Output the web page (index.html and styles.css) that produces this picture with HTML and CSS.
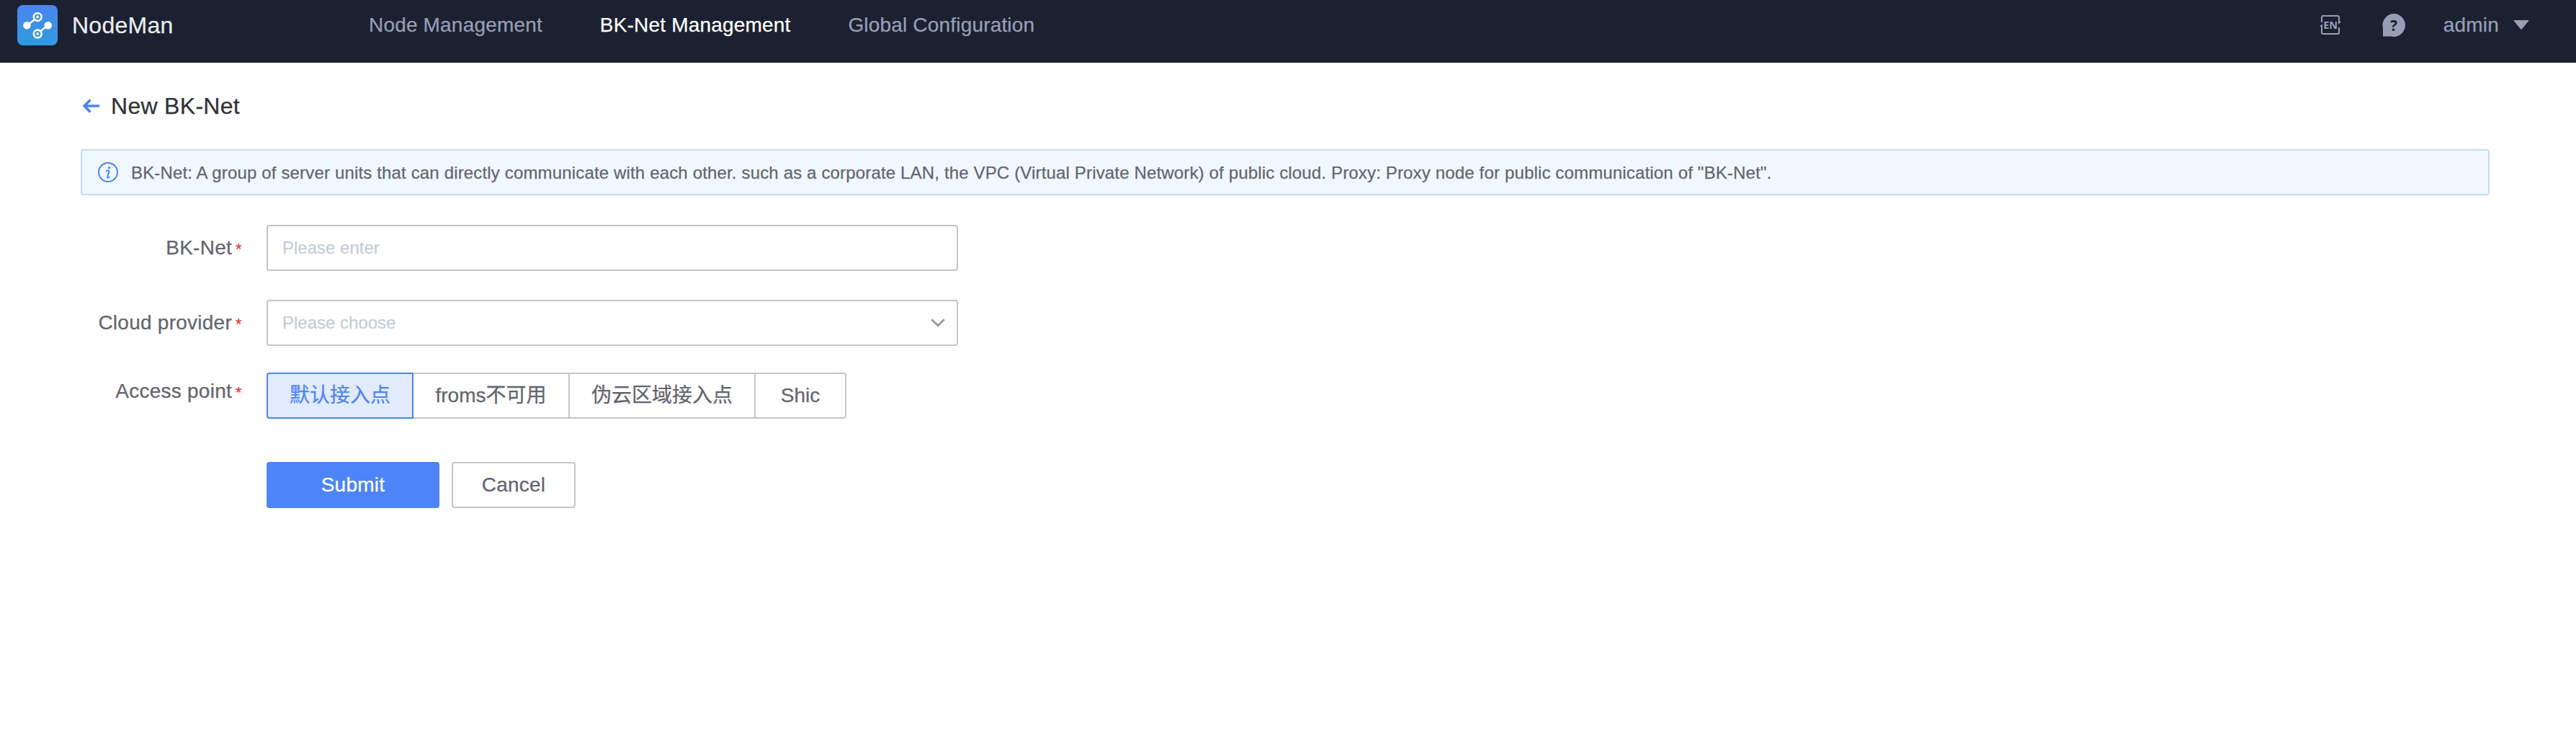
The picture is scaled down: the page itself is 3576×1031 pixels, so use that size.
FILE: index.html
```html
<!DOCTYPE html>
<html lang="en">
<head>
<meta charset="utf-8">
<title>NodeMan</title>
<link rel="stylesheet" href="styles.css">
</head>
<body>
<header class="header">
  <div class="brand">
    <svg class="logo" width="56" height="56" viewBox="0 0 56 56">
      <defs><linearGradient id="lg" x1="0" y1="0" x2="0" y2="1"><stop offset="0" stop-color="#4b85f0"/><stop offset="1" stop-color="#2e9be0"/></linearGradient></defs>
      <rect width="56" height="56" rx="8" fill="url(#lg)"/>
      <g stroke="#fff" stroke-width="2.600" fill="none">
        <path d="M14 28.300L24 20M42 28.300L32 36.500"/>
        <circle cx="28.200" cy="16.600" r="5.400"/><circle cx="28.200" cy="40" r="5.400"/>
      </g>
      <circle cx="28.200" cy="16.600" r="2" fill="#fff"/><circle cx="28.200" cy="40" r="2" fill="#fff"/>
      <circle cx="13.400" cy="28.300" r="5.300" fill="#fff"/><circle cx="42.700" cy="28.300" r="5.300" fill="#fff"/>
    </svg>
    <span class="brand-name">NodeMan</span>
  </div>
  <nav class="nav">
    <a class="nav-item">Node Management</a>
    <a class="nav-item active">BK-Net Management</a>
    <a class="nav-item">Global Configuration</a>
  </nav>
  <div class="tools">
    <svg class="lang" width="32" height="32" viewBox="0 0 32 32">
      <g fill="none" stroke="#979fb6" stroke-width="2">
        <path d="M3 12V5q0-2 2-2h20q2 0 2 2v8M27 19v7q0 2-2 2H5q-2 0-2-2V17"/>
      </g>
      <path d="M26 11h4l-4 4zM4 14v4H0z" fill="#979fb6"/>
      <text x="15.200" y="21" class="lang-text">EN</text>
    </svg>
    <svg class="help" width="32" height="32" viewBox="0 0 32 32">
      <path d="M16 0a16 16 0 1 1-4 31.500H1V20A16 16 0 0 1 16 0z" fill="#979fb6"/>
      <text x="16" y="23.500" class="help-text">?</text>
    </svg>
    <span class="user">admin</span>
    <svg class="caret" width="22" height="14" viewBox="0 0 22 14"><path d="M1.500 0h19q1.500 0 .5 1.200L12 12.300q-1 1-2 0L1 1.200Q0 0 1.500 0z" fill="#979fb6"/></svg>
  </div>
</header>
<main class="page">
  <div class="title-row">
    <svg class="back" width="26" height="22" viewBox="0 0 26 22"><path d="M11.500 2.500L3 11l8.500 8.500M3 11h21" fill="none" stroke="#4d84f7" stroke-width="3.500"/></svg>
    <h1 class="title">New BK-Net</h1>
  </div>
  <div class="alert">
    <svg class="info" width="28" height="28" viewBox="0 0 28 28"><circle cx="14" cy="14" r="13" fill="none" stroke="#4d84f7" stroke-width="2"/><circle cx="15.600" cy="7.800" r="1.700" fill="#4d84f7"/><path d="M11 12.700q3-1.800 4-1.600.8.300.2 2.400l-2 6.600q-.4 1.800.4 1.800 1 0 3-1.800" fill="none" stroke="#4d84f7" stroke-width="1.900"/></svg>
    <span class="alert-text">BK-Net: A group of server units that can directly communicate with each other. such as a corporate LAN, the VPC (Virtual Private Network) of public cloud. Proxy: Proxy node for public communication of "BK-Net".</span>
  </div>
  <form class="form">
    <div class="row">
      <label class="label"><span>BK-Net</span><span class="star">*</span></label>
      <div class="input"><span>Please enter</span></div>
    </div>
    <div class="row">
      <label class="label"><span>Cloud provider</span><span class="star">*</span></label>
      <div class="input"><span>Please choose</span>
        <svg class="chev" width="20" height="12" viewBox="0 0 20 12"><path d="M1.200 1.200l8.800 8.600 8.800-8.600" fill="none" stroke="#979ba5" stroke-width="2.800"/></svg>
      </div>
    </div>
    <div class="row row-radio">
      <label class="label label-up"><span>Access point</span><span class="star">*</span></label>
      <div class="radios">
        <div class="radio r1 checked">默认接入点</div>
        <div class="radio r2">froms不可用</div>
        <div class="radio r3">伪云区域接入点</div>
        <div class="radio r4">Shic</div>
      </div>
    </div>
    <div class="actions">
      <button type="button" class="btn submit">Submit</button>
      <button type="button" class="btn cancel">Cancel</button>
    </div>
  </form>
</main>
</body>
</html>
```

FILE: styles.css
```css
* { box-sizing: border-box; }
body {
  margin: 0;
  background: #fff;
  color: #63656e;
  font: 28px/36px "Liberation Sans", "Noto Sans CJK SC", sans-serif;
  letter-spacing: 0.18px;
  -webkit-text-stroke: 0.25px currentColor;
}
.header {
  display: flex;
  height: 87px;
  padding: 7px 65px 0 24px;
  background: #1b2130;
  color: #979fb6;
}
.header > * { height: 56px; display: flex; align-items: center; }
.brand { width: 488px; }
.brand-name { margin-left: 20px; font-size: 32px; color: #eaebf0; white-space: nowrap; letter-spacing: 0.25px; }
.nav-item { margin-right: 80px; white-space: nowrap; }
.nav-item.active { color: #fff; }
.tools { margin-left: auto; }
.lang { margin-right: 55px; }
.help { margin-right: 53px; }
.user { margin-right: 20px; }
.lang-text { font: bold 14.500px "Noto Sans", sans-serif; fill: #979fb6; text-anchor: middle; letter-spacing: 0; -webkit-text-stroke: 0; }
.help-text { font: bold 21px "Noto Sans", sans-serif; fill: #1b2130; text-anchor: middle; -webkit-text-stroke: 0; }
.page { padding: 38px 120px 0 112px; }
.title-row { display: flex; align-items: center; height: 44px; }
.back { margin: 0 14px 0 2px; }
.title { margin: 0; font-size: 32px; font-weight: 400; color: #313238; white-space: nowrap; letter-spacing: 0.3px; }
.alert {
  display: flex;
  align-items: center;
  height: 64px;
  margin-top: 38px;
  padding-left: 22px;
  border: 2px solid #c5d9ff;
  border-radius: 4px;
  background: #f0f8ff;
  font-size: 24px;
}
.alert-text { margin-left: 18px; padding-top: 1px; white-space: nowrap; letter-spacing: 0.157px; }
.form { margin-top: 41px; }
.row { display: flex; align-items: center; height: 64px; margin-bottom: 40px; }
.row-radio { margin-top: -3px; margin-bottom: 60px; }
.label { display: flex; justify-content: flex-end; align-items: center; width: 258px; padding-right: 34px; white-space: nowrap; letter-spacing: 0.25px; }
.label-up { margin-top: -12px; }
.star { margin: 3px 0 0 5px; width: 9px; font-size: 22px; line-height: 22px; color: #ea3636; }
.input {
  display: flex;
  align-items: center;
  justify-content: space-between;
  width: 960px;
  height: 64px;
  padding: 0 16px 0 20px;
  border: 2px solid #c4c6cc;
  border-radius: 4px;
  font-size: 24px;
  letter-spacing: 0;
  color: #c3cdd7;
}
.radios { display: flex; }
.radio {
  display: flex;
  align-items: center;
  justify-content: center;
  height: 64px;
  border: 2px solid #c4c6cc;
  border-left: 0;
  white-space: nowrap;
  letter-spacing: 0;
}
.radio.checked { border: 2px solid #4d84f7; border-radius: 4px 0 0 4px; background: #e1ebfd; color: #4d84f7; }
.r1 { width: 204px; }
.r2 { width: 217px; }
.r3 { width: 258px; }
.r4 { width: 126px; border-radius: 0 4px 4px 0; }
.actions { display: flex; gap: 17px; margin-left: 258px; }
.btn { height: 64px; padding: 0; border: 2px solid #c4c6cc; border-radius: 4px; background: #fff; font: inherit; letter-spacing: 0.25px; color: #63656e; }
.submit { width: 240px; border-color: #4d84f7; background: #4d84f7; color: #fff; }
.cancel { width: 172px; }
```
